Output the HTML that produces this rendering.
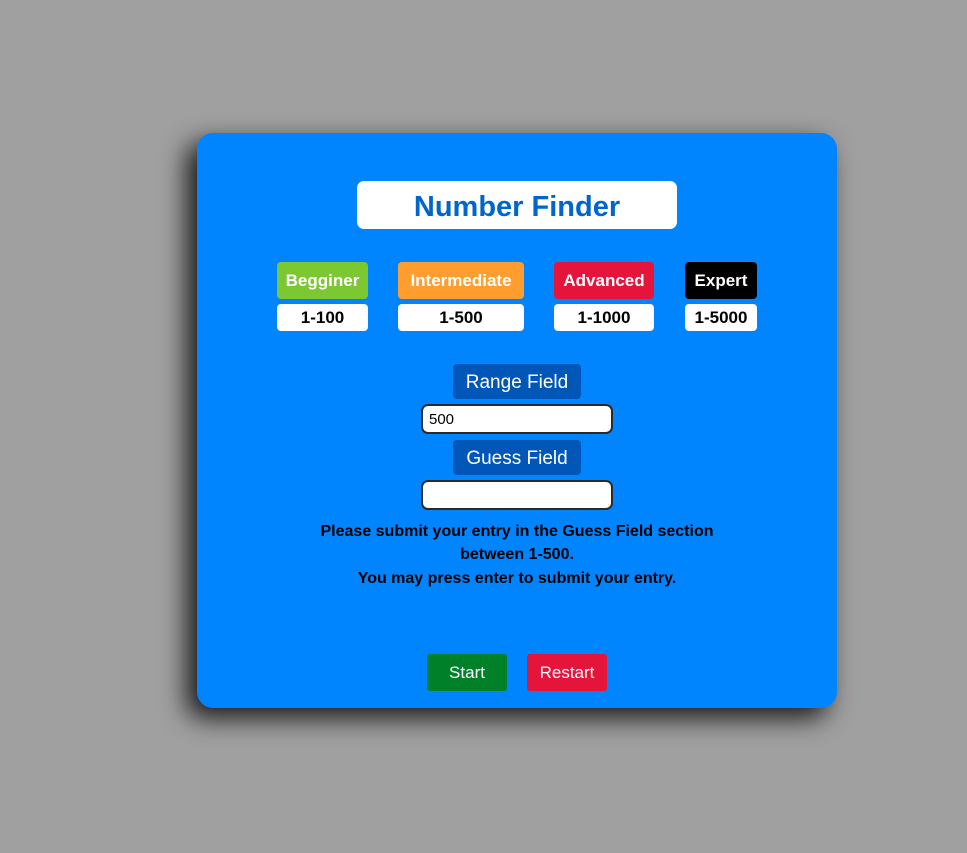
<!DOCTYPE html>
<html><head><style>
html,body{margin:0;width:967px;height:853px;background:#a0a0a0;overflow:hidden;font-family:"Liberation Sans",sans-serif;}
.a{position:absolute;box-sizing:border-box;display:flex;align-items:center;justify-content:center;}
#card{position:absolute;left:197px;top:133px;width:640px;height:575px;background:#0085ff;border-radius:16px;box-shadow:-10px 10px 26px rgba(0,0,0,.85);}
.lab{color:#fff;font-weight:bold;font-size:17px;border-radius:4px;}
.val{background:#fff;color:#000;font-weight:bold;font-size:17px;border-radius:4px;}
.fl{background:#0057b8;color:#fff;font-size:19px;border-radius:4px;}
.in{background:#fff;border:2px solid #2a2a2a;border-radius:7px;justify-content:flex-start;padding-left:6px;font-size:15px;color:#000;}
.txt{left:290px;width:454px;font-weight:bold;font-size:16px;color:#000;}
.btn{color:#fff;font-size:17px;border-radius:3px;}
</style></head><body>
<div id="card"></div>
<div class="a" style="left:357px;top:181px;width:320px;height:48px;background:#fff;border-radius:7px;color:#0066cc;font-weight:bold;font-size:29px;padding-top:4px;">Number Finder</div>

<div class="a lab" style="left:277px;top:262px;width:91px;height:37px;background:#7cc832;">Begginer</div>
<div class="a lab" style="left:398px;top:262px;width:126px;height:37px;background:#ff9e2e;">Intermediate</div>
<div class="a lab" style="left:554px;top:262px;width:100px;height:37px;background:#e5143a;">Advanced</div>
<div class="a lab" style="left:685px;top:262px;width:72px;height:37px;background:#000;">Expert</div>

<div class="a val" style="left:277px;top:304px;width:91px;height:27px;">1-100</div>
<div class="a val" style="left:398px;top:304px;width:126px;height:27px;">1-500</div>
<div class="a val" style="left:554px;top:304px;width:100px;height:27px;">1-1000</div>
<div class="a val" style="left:685px;top:304px;width:72px;height:27px;">1-5000</div>

<div class="a fl" style="left:453px;top:364px;width:128px;height:35px;padding-top:2px;">Range Field</div>
<div class="a in" style="left:421px;top:404px;width:192px;height:30px;">500</div>
<div class="a fl" style="left:453px;top:440px;width:128px;height:35px;padding-top:2px;">Guess Field</div>
<div class="a in" style="left:421px;top:480px;width:192px;height:30px;"></div>

<div class="a txt" style="top:520px;height:23px;">Please submit your entry in the Guess Field section</div>
<div class="a txt" style="top:543px;height:23px;">between 1-500.</div>
<div class="a txt" style="top:567px;height:23px;">You may press enter to submit your entry.</div>

<div class="a btn" style="left:427px;top:654px;width:80px;height:37px;background:#008029;">Start</div>
<div class="a btn" style="left:527px;top:654px;width:80px;height:37px;background:#e5143a;">Restart</div>
</body></html>
